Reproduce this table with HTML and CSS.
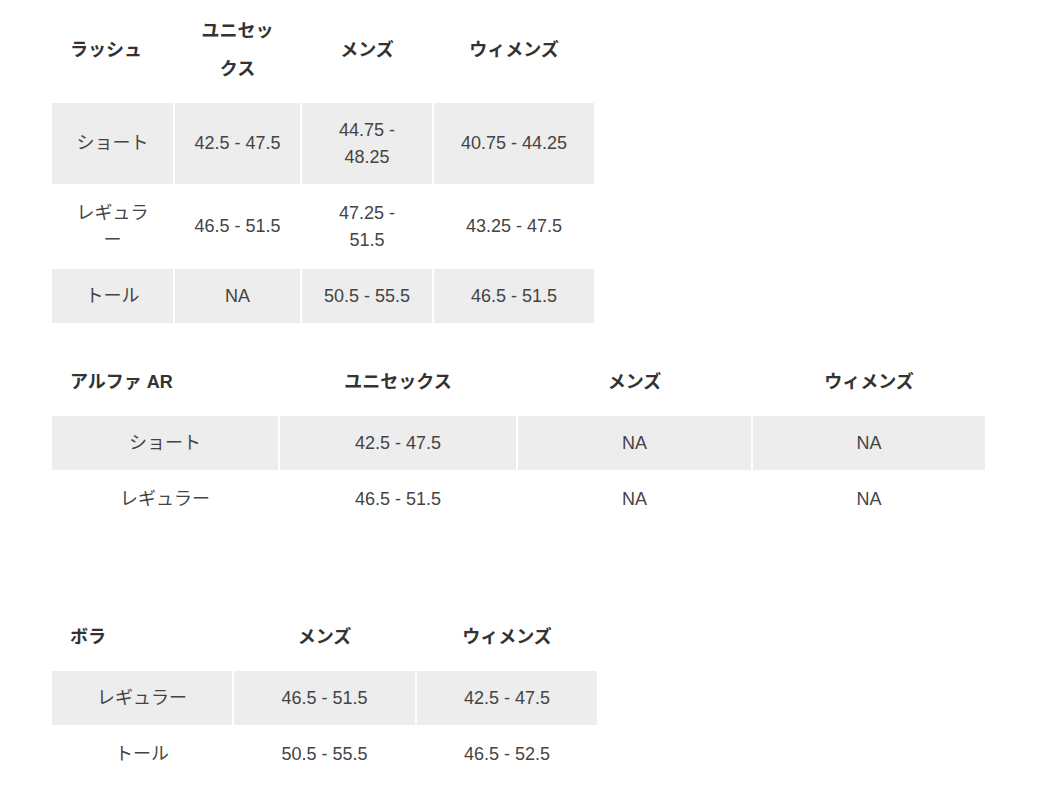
FILE: index.html
```html
<!DOCTYPE html>
<html lang="ja">
<head>
<meta charset="utf-8">
<title>サイズ表</title>
<link rel="stylesheet" href="styles.css">
</head>
<body>
<div class="page">
  <table class="size-table t-rush">
    <thead>
      <tr>
        <th class="c1 first">ラッシュ</th>
        <th class="c2">ユニセックス</th>
        <th class="c3">メンズ</th>
        <th class="c4">ウィメンズ</th>
      </tr>
    </thead>
    <tbody>
      <tr class="shade">
        <td>ショート</td><td>42.5 - 47.5</td><td>44.75 - 48.25</td><td>40.75 - 44.25</td>
      </tr>
      <tr>
        <td>レギュラー</td><td>46.5 - 51.5</td><td>47.25 - 51.5</td><td>43.25 - 47.5</td>
      </tr>
      <tr class="shade">
        <td>トール</td><td>NA</td><td>50.5 - 55.5</td><td>46.5 - 51.5</td>
      </tr>
    </tbody>
  </table>

  <table class="size-table t-alpha">
    <thead>
      <tr>
        <th class="c1 first">アルファ AR</th>
        <th class="c2">ユニセックス</th>
        <th class="c3">メンズ</th>
        <th class="c4">ウィメンズ</th>
      </tr>
    </thead>
    <tbody>
      <tr class="shade">
        <td>ショート</td><td>42.5 - 47.5</td><td>NA</td><td>NA</td>
      </tr>
      <tr>
        <td>レギュラー</td><td>46.5 - 51.5</td><td>NA</td><td>NA</td>
      </tr>
    </tbody>
  </table>

  <table class="size-table t-bora">
    <thead>
      <tr>
        <th class="c1 first">ボラ</th>
        <th class="c2">メンズ</th>
        <th class="c3">ウィメンズ</th>
      </tr>
    </thead>
    <tbody>
      <tr class="shade">
        <td>レギュラー</td><td>46.5 - 51.5</td><td>42.5 - 47.5</td>
      </tr>
      <tr>
        <td>トール</td><td>50.5 - 55.5</td><td>46.5 - 52.5</td>
      </tr>
    </tbody>
  </table>
</div>
</body>
</html>
```

FILE: styles.css
```css
html, body {
  margin: 0;
  padding: 0;
  background: #ffffff;
}

.page {
  padding-left: 50px;
  font-family: "Liberation Sans", "Noto Sans CJK JP", sans-serif;
  font-size: 18px;
  color: #444444;
}

.size-table {
  border-collapse: separate;
  border-spacing: 2px;
  table-layout: fixed;
  line-break: loose;
}

.size-table th,
.size-table td {
  box-sizing: border-box;
  padding: 13.5px 18px;
  text-align: center;
  vertical-align: middle;
}

.size-table th {
  font-weight: bold;
  color: #333333;
  line-height: 38px;
}

.size-table th.first {
  text-align: left;
}

.size-table td {
  line-height: 27px;
  font-weight: normal;
}

.size-table tr.shade td {
  background: #ededed;
}

/* table 1 */
.t-rush {
  width: 546px;
  margin-top: -4px;
}
.t-rush .c1 { width: 121px; }
.t-rush .c2 { width: 125px; }
.t-rush .c3 { width: 130px; }
.t-rush .c4 { width: 160px; }

/* table 2 */
.t-alpha {
  width: 937px;
  margin-top: 22px;
}
.t-alpha .c1 { width: 226px; }
.t-alpha .c2 { width: 236px; }
.t-alpha .c3 { width: 233px; }
.t-alpha .c4 { width: 232px; }

/* table 3 */
.t-bora {
  width: 549px;
  margin-top: 74px;
}
.t-bora .c1 { width: 180px; }
.t-bora .c2 { width: 181px; }
.t-bora .c3 { width: 180px; }
```
